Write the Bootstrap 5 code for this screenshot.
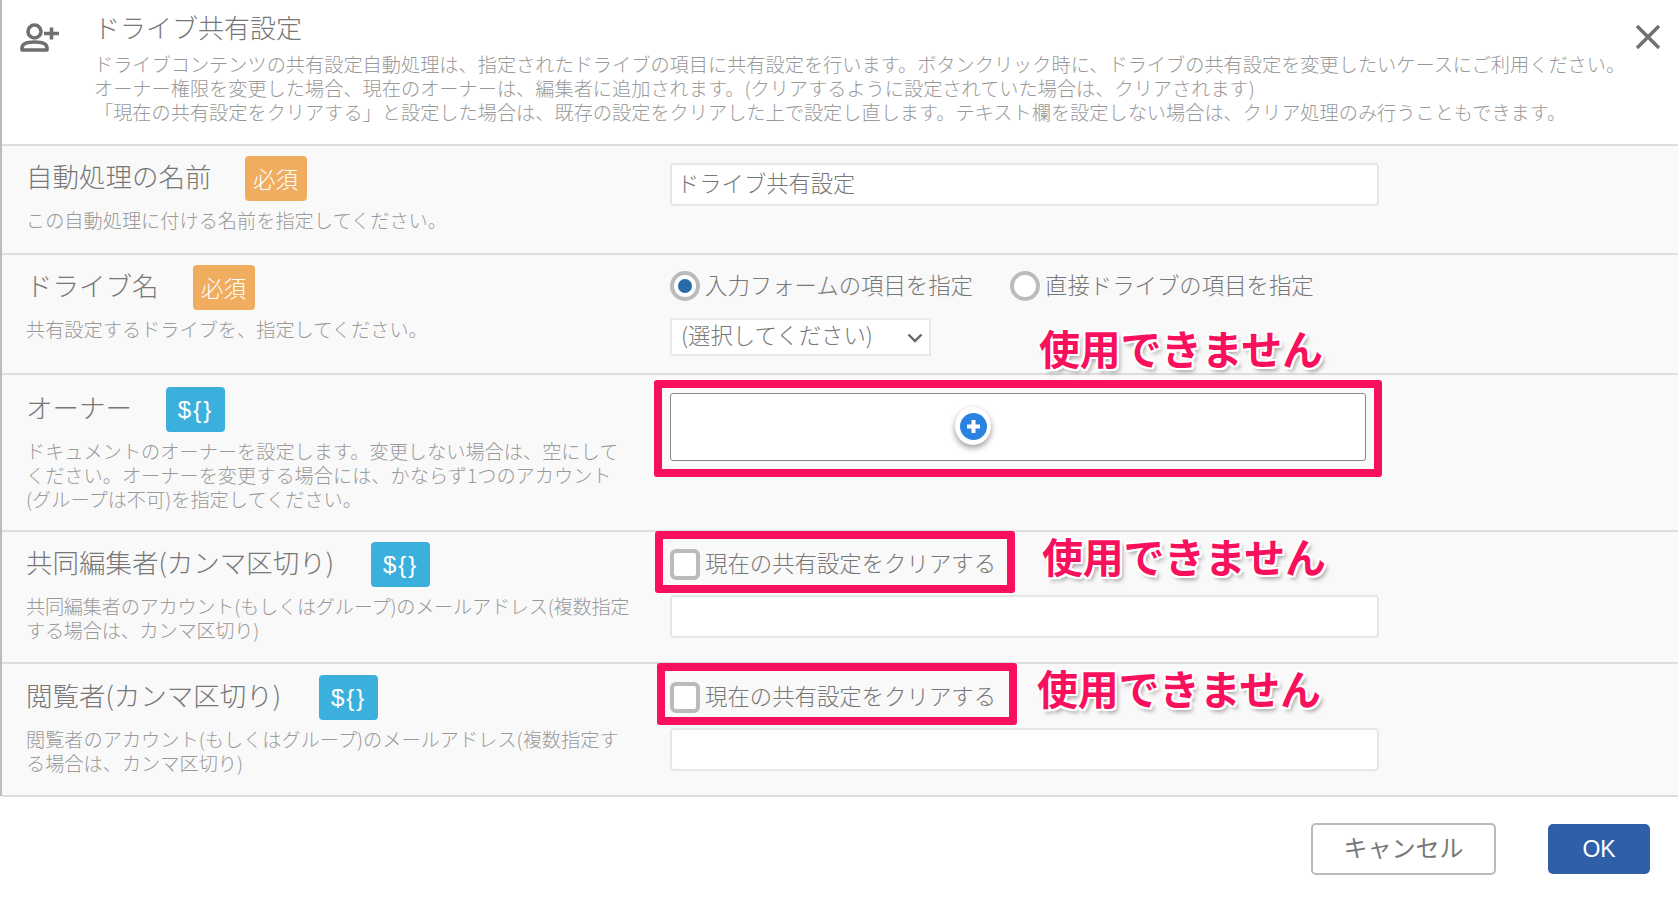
<!doctype html>
<html lang="ja"><head><meta charset="utf-8"><title>ドライブ共有設定</title>
<link href="https://cdn.jsdelivr.net/npm/bootstrap@5.3.0/dist/css/bootstrap.min.css" rel="stylesheet">
<style>
html,body{height:898px;overflow:hidden}
body{font-family:"Noto Sans CJK JP","Liberation Sans",sans-serif;color:#777;background:#fff;font-weight:300}
.dlg{border-left:2px solid #bbb;height:796px;width:1678px;margin:0}
.dlg-head{height:146px;border-bottom:2px solid #ddd;background:#fff;position:relative;padding:12px 0 0 92px}
.head-icon{position:absolute;left:16px;top:20px;width:44px;height:36px}
.close-x{position:absolute;left:1632px;top:23px;width:28px;height:28px}
.dlg-title{font-size:26px;line-height:30px;color:#777;margin:0 0 10px}
.dlg-desc{font-size:19.200px;line-height:24px;color:#999;white-space:nowrap;margin:0}
.frow{background:#f9f9f9;border-bottom:2px solid #ddd;position:relative;display:flex}
.r1{height:109px}.r2{height:120px}.r3{height:157px}.r4{height:132px}.r5{height:133px}
.lcol{width:668px;padding-left:24px;flex:none}
.rcol{flex:1}
.lab-line{display:flex;align-items:center;height:45px;gap:var(--g)}
.r1 .lab-line{margin-top:10px}.r2 .lab-line{margin-top:10px}.r3 .lab-line{margin-top:12px}.r4 .lab-line{margin-top:10px}.r5 .lab-line{margin-top:11px}
.lab{font-size:26.500px;line-height:1;color:#777;white-space:nowrap;position:relative;top:-2px}
.tag{width:62px;height:45px;border-radius:4px;color:#fff;font-size:22.500px;display:flex;align-items:center;justify-content:center}
.tag-req{background:#f0ad5f}
.tag-var{background:#3cb0dc;width:59px;font-size:24px;letter-spacing:2px;font-family:"Liberation Sans",sans-serif}
.hint{font-size:19.200px;line-height:24px;color:#999;margin:7px 0 0;width:604px}
.hint-tight{letter-spacing:-.25px;width:606px}
.fld{display:block;width:709px;height:43px;background:#fff;border:2px solid #e6e6e6;border-radius:4px;font-size:22.300px;line-height:34px;padding:0 5px;color:#777;font-weight:300}
.r1 .fld{margin-top:17px}
.r4 .fld{margin-top:14px}.r5 .fld{margin-top:14px}
.opt-line{display:flex;align-items:center;height:34px;font-size:22.400px;white-space:nowrap;line-height:1}
.opt-line>span:not(.rd):not(.cb){position:relative;top:-2px}
.r2 .opt-line{margin-top:14px}.r4 .opt-line{margin-top:15px}.r5 .opt-line{margin-top:16px}
.rd{width:30px;height:30px;border:4px solid #bbb;border-radius:50%;background:#fff;margin-right:5px;flex:none;display:flex;align-items:center;justify-content:center}
.rd i{width:14px;height:14px;border-radius:50%;background:#2a6aa8;display:block}
.second-rd{margin-left:37px}
.cb{width:30px;height:31px;border:4px solid #bbb;border-radius:6px;background:#fff;margin-right:5px;flex:none}
.sel{width:261px;height:38px;margin-top:15px;background:#fff;border:2px solid #eaeaea;font-size:22.400px;padding:0 6px 4px 9px;display:flex;align-items:center;justify-content:space-between;color:#777}
.sel svg{position:relative;top:3px}
.owner-f{width:696px;height:68px;margin-top:18px;background:#fff;border:1px solid #888;border-radius:3px;padding:13px 0 0 284px}
.add-b{width:36px;height:38px;border-radius:50%;background:#fff;box-shadow:0 3px 6px rgba(0,0,0,.4);display:flex;align-items:center;justify-content:center}
.red-box{position:absolute;border:8px solid #f8105c;border-radius:3px;pointer-events:none}
.note{position:absolute;font-size:41px;line-height:48px;font-weight:700;color:#f8105c;white-space:nowrap;letter-spacing:-.3px;
text-shadow:2px 0 0 #fff,-2px 0 0 #fff,0 2px 0 #fff,0 -2px 0 #fff,2px 2px 0 #fff,-2px 2px 0 #fff,2px -2px 0 #fff,-2px -2px 0 #fff,3px 4px 4px rgba(0,0,0,.35);z-index:2}
.dlg-foot{height:102px;display:flex;align-items:flex-start;justify-content:flex-end;background:#fff;padding:27px 28px 0 0;gap:52px}
.b-cancel{width:185px;height:52px;border:2px solid #bbb;border-radius:5px;background:#fff;color:#777;font-size:24px;padding:0 0 4px}
.b-ok{width:102px;height:50px;margin-top:1px;border:0;border-radius:5px;background:#2f5fa8;color:#fff;font-size:23px;padding:0;font-family:"Liberation Sans",sans-serif}
</style></head><body>
<div class="dlg">
 <div class="dlg-head">
  <svg class="head-icon" viewBox="0 0 44 36" fill="none" stroke="#6f6f6f" stroke-width="3.600"><circle cx="16.500" cy="11.500" r="6.500"/><path d="M4 30v-2c0-4 5-6 12.500-6s12.500 2 12.500 6v2z" stroke-linejoin="round"/><path d="M26 13.500h15M33.500 7.500v12"/></svg>
  <svg class="close-x" viewBox="0 0 28 28" stroke="#6f7072" stroke-width="3.400"><path d="M3 3l22 22M25 3L3 25"/></svg>
  <h1 class="dlg-title fw-light">ドライブ共有設定</h1>
  <p class="dlg-desc">ドライブコンテンツの共有設定自動処理は、指定されたドライブの項目に共有設定を行います。ボタンクリック時に、ドライブの共有設定を変更したいケースにご利用ください。<br>オーナー権限を変更した場合、現在のオーナーは、編集者に追加されます。(クリアするように設定されていた場合は、クリアされます)<br>「現在の共有設定をクリアする」と設定した場合は、既存の設定をクリアした上で設定し直します。テキスト欄を設定しない場合は、クリア処理のみ行うこともできます。</p>
 </div>
 <div class="frow r1">
  <div class="lcol"><div class="lab-line" style="--g:33px"><span class="lab">自動処理の名前</span><span class="tag tag-req">必須</span></div><p class="hint">この自動処理に付ける名前を指定してください。</p></div>
  <div class="rcol"><div class="fld">ドライブ共有設定</div></div>
 </div>
 <div class="frow r2">
  <div class="lcol"><div class="lab-line" style="--g:34px"><span class="lab">ドライブ名</span><span class="tag tag-req">必須</span></div><p class="hint">共有設定するドライブを、指定してください。</p></div>
  <div class="rcol">
   <div class="opt-line"><span class="rd"><i></i></span><span>入力フォームの項目を指定</span><span class="rd second-rd"></span><span>直接ドライブの項目を指定</span></div>
   <div class="sel"><span>(選択してください)</span><svg width="16" height="10" viewBox="0 0 16 10" fill="none" stroke="#666" stroke-width="2.400"><path d="M1.500 1.500L8 8l6.500-6.500"/></svg></div>
  </div>
  <div class="note" style="left:1037px;top:68px">使用できません</div>
 </div>
 <div class="frow r3">
  <div class="lcol"><div class="lab-line" style="--g:34px"><span class="lab">オーナー</span><span class="tag tag-var">${}</span></div><p class="hint">ドキュメントのオーナーを設定します。変更しない場合は、空にしてください。オーナーを変更する場合には、かならず1つのアカウント(グループは不可)を指定してください。</p></div>
  <div class="rcol"><div class="owner-f"><div class="add-b"><svg width="27" height="27" viewBox="0 0 27 27"><circle cx="13.500" cy="13.500" r="13.500" fill="#2a82df"/><path d="M13.500 7v13M7 13.500h13" stroke="#fff" stroke-width="4"/></svg></div></div></div>
  <div class="red-box" style="left:652px;top:5px;width:728px;height:97px"></div>
 </div>
 <div class="frow r4">
  <div class="lcol"><div class="lab-line" style="--g:37px"><span class="lab">共同編集者(カンマ区切り)</span><span class="tag tag-var">${}</span></div><p class="hint hint-tight">共同編集者のアカウント(もしくはグループ)のメールアドレス(複数指定する場合は、カンマ区切り)</p></div>
  <div class="rcol"><div class="opt-line"><span class="cb"></span><span>現在の共有設定をクリアする</span></div><div class="fld"></div></div>
  <div class="red-box" style="left:653px;top:-1px;width:360px;height:62px"></div>
  <div class="note" style="left:1040px;top:-1px">使用できません</div>
 </div>
 <div class="frow r5">
  <div class="lcol"><div class="lab-line" style="--g:38px"><span class="lab">閲覧者(カンマ区切り)</span><span class="tag tag-var">${}</span></div><p class="hint">閲覧者のアカウント(もしくはグループ)のメールアドレス(複数指定する場合は、カンマ区切り)</p></div>
  <div class="rcol"><div class="opt-line"><span class="cb"></span><span>現在の共有設定をクリアする</span></div><div class="fld"></div></div>
  <div class="red-box" style="left:655px;top:-1px;width:360px;height:62px"></div>
  <div class="note" style="left:1035px;top:-1px">使用できません</div>
 </div>
</div>
<div class="dlg-foot">
 <button class="btn b-cancel" type="button">キャンセル</button>
 <button class="btn b-ok" type="button">OK</button>
</div>
</body></html>
